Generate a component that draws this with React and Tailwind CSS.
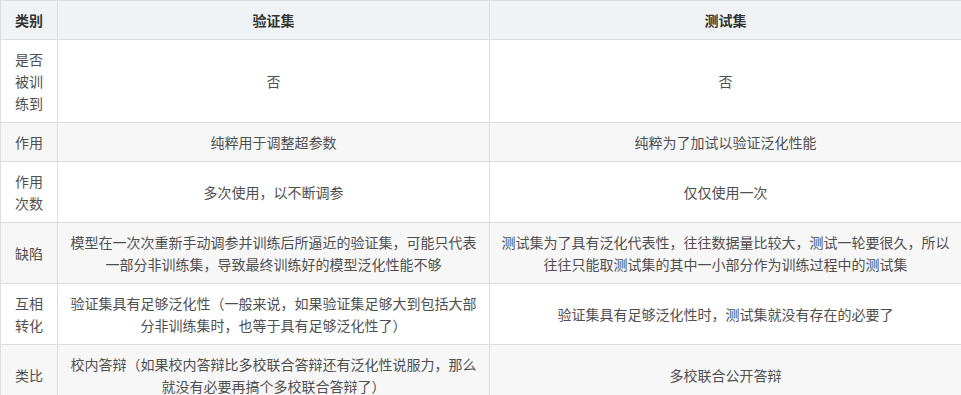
const rows = [
  { k: '是否被训练到', a: '否', b: '否' },
  { k: '作用', a: '纯粹用于调整超参数', b: '纯粹为了加试以验证泛化性能' },
  { k: '作用次数', a: '多次使用，以不断调参', b: '仅仅使用一次' },
  {
    k: '缺陷',
    a: '模型在一次次重新手动调参并训练后所逼近的验证集，可能只代表一部分非训练集，导致最终训练好的模型泛化性能不够',
    b: '测试集为了具有泛化代表性，往往数据量比较大，测试一轮要很久，所以往往只能取测试集的其中一小部分作为训练过程中的测试集',
  },
  {
    k: '互相转化',
    a: '验证集具有足够泛化性（一般来说，如果验证集足够大到包括大部分非训练集时，也等于具有足够泛化性了）',
    b: '验证集具有足够泛化性时，测试集就没有存在的必要了',
  },
  {
    k: '类比',
    a: '校内答辩（如果校内答辩比多校联合答辩还有泛化性说服力，那么就没有必要再搞个多校联合答辩了）',
    b: '多校联合公开答辩',
  },
];

export default function App() {
  return (
    <div
      lang="zh-CN"
      className="w-[961px] h-[395px] overflow-hidden bg-white font-['Noto_Sans_CJK_SC','Noto_Sans',sans-serif] text-[14px] leading-[22px] text-[#4f4f4f]"
    >
      <table className="table-fixed border-collapse w-[961px]">
        <colgroup>
          <col className="w-[57px]" />
          <col className="w-[432px]" />
          <col className="w-[472px]" />
        </colgroup>
        <thead>
          <tr className="bg-[#eff3f5]">
            <th className="border border-[#dddddd] px-[12px] py-[8px] text-center font-bold text-[#333333]">类别</th>
            <th className="border border-[#dddddd] px-[12px] py-[8px] text-center font-bold text-[#333333]">验证集</th>
            <th className="border border-[#dddddd] px-[10px] py-[8px] text-center font-bold text-[#333333]">测试集</th>
          </tr>
        </thead>
        <tbody>
          {rows.map((r, i) => (
            <tr key={i} className={i % 2 === 1 ? 'bg-[#f7f7f7]' : 'bg-white'}>
              <td className="border border-[#dddddd] px-[12px] py-[8px] text-center align-middle">{r.k}</td>
              <td className="border border-[#dddddd] px-[12px] py-[8px] text-center align-middle">{r.a}</td>
              <td className="border border-[#dddddd] px-[10px] py-[8px] text-center align-middle">{r.b}</td>
            </tr>
          ))}
        </tbody>
      </table>
    </div>
  );
}
